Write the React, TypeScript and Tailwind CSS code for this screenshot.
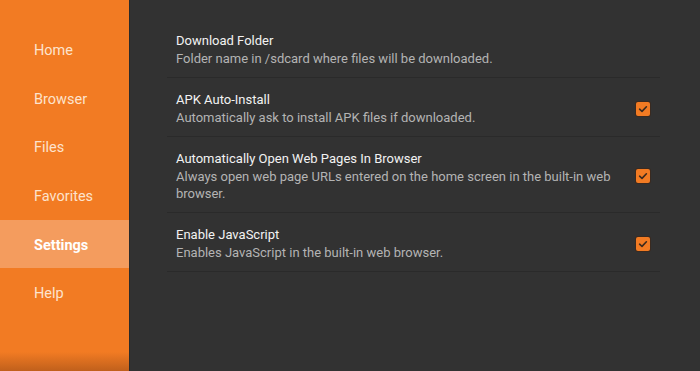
import { useState } from 'react';

const navItems = ['Home', 'Browser', 'Files', 'Favorites', 'Settings', 'Help'];

interface SettingRow {
  title: string;
  summary: string;
  checkbox: boolean;
}

const settings: SettingRow[] = [
  {
    title: 'Download Folder',
    summary: 'Folder name in /sdcard where files will be downloaded.',
    checkbox: false,
  },
  {
    title: 'APK Auto-Install',
    summary: 'Automatically ask to install APK files if downloaded.',
    checkbox: true,
  },
  {
    title: 'Automatically Open Web Pages In Browser',
    summary: 'Always open web page URLs entered on the home screen in the built-in web browser.',
    checkbox: true,
  },
  {
    title: 'Enable JavaScript',
    summary: 'Enables JavaScript in the built-in web browser.',
    checkbox: true,
  },
];

function CheckBox({ checked, onToggle }: { checked: boolean; onToggle: () => void }) {
  return (
    <button
      type="button"
      onClick={onToggle}
      className="flex h-[14px] w-[14px] shrink-0 items-center justify-center rounded-[2px] bg-[#f27b23] shadow-[0_0_0_1px_#3a2a20]"
    >
      {checked && (
        <svg viewBox="0 0 14 14" className="h-[14px] w-[14px]">
          <path d="M3.6 7.2 L6 9.4 L10.4 4.8" fill="none" stroke="#3b2a1e" strokeWidth="1.6" strokeLinecap="round" strokeLinejoin="round" />
        </svg>
      )}
    </button>
  );
}

export default function App() {
  const [active, setActive] = useState('Settings');
  const [checks, setChecks] = useState<boolean[]>(settings.map(s => s.checkbox));

  const toggle = (i: number) => {
    setChecks(prev => prev.map((v, idx) => (idx === i ? !v : v)));
  };

  return (
    <div className="flex h-[371px] w-[700px] overflow-hidden bg-[#323232] font-['Roboto','Liberation_Sans',sans-serif]">
      <aside className="flex w-[130px] shrink-0 flex-col border-r border-[#2a2a2a] bg-[linear-gradient(to_bottom,#f27b23_0px,#f27b23_352px,#c0601c_371px)] pt-[25px]">
        {navItems.map(item => (
          <button
            key={item}
            type="button"
            onClick={() => setActive(item)}
            className={`flex h-[48.7px] items-center pt-[3px] pl-[34px] text-left text-[14.5px] ${
              active === item ? 'bg-[#f49c5e] font-bold text-white' : 'text-[#fde3cd]'
            }`}
          >
            {item}
          </button>
        ))}
      </aside>

      <main className="flex-1 pt-[19px] pl-[37px] pr-[40px]">
        {settings.map((s, i) => (
          <div key={s.title} className="flex items-center gap-4 border-b border-[#2a2a2a] pt-[13px] pb-[10px] pl-[9px] pr-[10px]">
            <div className="flex-1">
              <div className="text-[13px] leading-[18px] text-[#f2f2f2]">{s.title}</div>
              <div className="text-[13px] leading-[17px] text-[#b4b4b4]">{s.summary}</div>
            </div>
            {s.checkbox && <CheckBox checked={checks[i]} onToggle={() => toggle(i)} />}
          </div>
        ))}
      </main>
    </div>
  );
}
